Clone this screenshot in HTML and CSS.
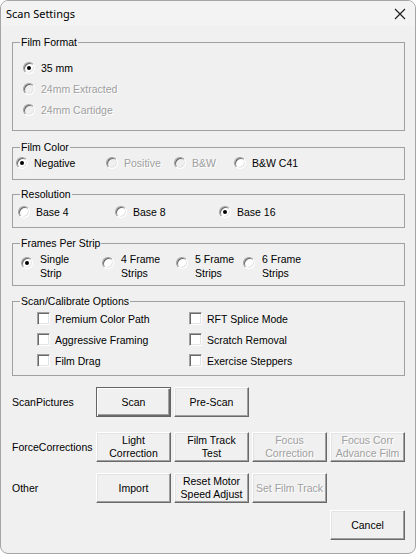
FILE: index.html
```html
<!DOCTYPE html>
<html lang="en">
<head>
    <meta charset="UTF-8">
    <title>Scan Settings</title>
    <link rel="stylesheet" href="styles.css">
</head>
<body>
    <div class="window">
        <div class="titlebar">
            <span class="title">Scan Settings</span>
            <svg class="close" width="12" height="12" viewBox="0 0 12 12">
                <path d="M1 1 L11 11 M11 1 L1 11" stroke="#1a1a1a" stroke-width="1.1" fill="none"/>
            </svg>
        </div>

        <div class="content">
            <!-- Film Format -->
            <fieldset class="group group-format">
                <legend>Film Format</legend>
                <div class="group-body">
                    <div class="opt"><span class="radio checked"></span>35 mm</div>
                    <div class="opt disabled"><span class="radio"></span>24mm Extracted</div>
                    <div class="opt disabled"><span class="radio"></span>24mm Cartidge</div>
                </div>
            </fieldset>

            <!-- Film Color -->
            <fieldset class="group group-color">
                <legend>Film Color</legend>
                <div class="group-body">
                    <div class="opt"><span class="radio checked"></span>Negative</div>
                    <div class="opt disabled"><span class="radio"></span>Positive</div>
                    <div class="opt disabled"><span class="radio"></span>B&amp;W</div>
                    <div class="opt"><span class="radio"></span>B&amp;W C41</div>
                </div>
            </fieldset>

            <!-- Resolution -->
            <fieldset class="group group-res">
                <legend>Resolution</legend>
                <div class="group-body">
                    <div class="opt"><span class="radio"></span>Base 4</div>
                    <div class="opt"><span class="radio"></span>Base 8</div>
                    <div class="opt"><span class="radio checked"></span>Base 16</div>
                </div>
            </fieldset>

            <!-- Frames Per Strip -->
            <fieldset class="group group-frames">
                <legend>Frames Per Strip</legend>
                <div class="group-body">
                    <div class="opt multi"><span class="radio checked"></span><span>Single<br>Strip</span></div>
                    <div class="opt multi"><span class="radio"></span><span>4 Frame<br>Strips</span></div>
                    <div class="opt multi"><span class="radio"></span><span>5 Frame<br>Strips</span></div>
                    <div class="opt multi"><span class="radio"></span><span>6 Frame<br>Strips</span></div>
                </div>
            </fieldset>

            <!-- Scan/Calibrate Options -->
            <fieldset class="group group-options">
                <legend>Scan/Calibrate Options</legend>
                <div class="group-body">
                    <div class="opt"><span class="check"></span>Premium Color Path</div>
                    <div class="opt"><span class="check"></span>RFT Splice Mode</div>
                    <div class="opt"><span class="check"></span>Aggressive Framing</div>
                    <div class="opt"><span class="check"></span>Scratch Removal</div>
                    <div class="opt"><span class="check"></span>Film Drag</div>
                    <div class="opt"><span class="check"></span>Exercise Steppers</div>
                </div>
            </fieldset>

            <!-- Botoes -->
            <div class="btn-row row-scan">
                <span class="row-label">ScanPictures</span>
                <button class="btn default">Scan</button>
                <button class="btn">Pre-Scan</button>
            </div>
            <div class="btn-row row-force">
                <span class="row-label">ForceCorrections</span>
                <button class="btn">Light<br>Correction</button>
                <button class="btn">Film Track<br>Test</button>
                <button class="btn" disabled>Focus<br>Correction</button>
                <button class="btn" disabled>Focus Corr<br>Advance Film</button>
            </div>
            <div class="btn-row row-other">
                <span class="row-label">Other</span>
                <button class="btn">Import</button>
                <button class="btn">Reset Motor<br>Speed Adjust</button>
                <button class="btn" disabled>Set Film Track</button>
            </div>
            <div class="btn-row row-cancel">
                <button class="btn">Cancel</button>
            </div>
        </div>
    </div>
</body>
</html>
```

FILE: styles.css
```css
* {
    box-sizing: border-box;
}

body {
    margin: 0;
    background-color: #ffffff;
    font-family: "Liberation Sans", Arial, sans-serif;
    font-size: 10.5px;
    color: #000000;
}

.window {
    width: 416px;
    height: 554px;
    background-color: #f0f0f0;
    border: 1px solid #a5a5a5;
    border-radius: 8px;
    overflow: hidden;
}

.titlebar {
    height: 25px;
    background-color: #f3f3f3;
    display: flex;
    align-items: center;
    justify-content: space-between;
    padding: 0 9px 1px 5px;
}

.title {
    font-family: "Noto Sans", sans-serif;
    font-size: 11px;
}

.close {
    display: block;
    margin-top: 1px;
}

.content {
    padding: 0 10px 0 11px;
}

/* Group boxes */
.group {
    margin: 0;
    padding: 0;
    min-width: 0;
    border: 1px solid #a0a0a0;
}

.group legend {
    margin-left: 7px;
    padding: 0 1px;
    line-height: 12px;
}

.group-format { margin-top: 10px; }
.group-color { margin-top: 10px; }
.group-res { margin-top: 8px; }
.group-frames { margin-top: 9px; }
.group-options { margin-top: 9px; }

.group-format .group-body {
    padding: 9px 0 10px 10px;
}

.group-format .opt {
    height: 21px;
}

.group-color .group-body {
    display: grid;
    grid-template-columns: 90px 68px 60px auto;
    padding: 2px 0 8px 3px;
}

.group-res .group-body {
    display: grid;
    grid-template-columns: 97px 104px auto;
    padding: 4px 0 7px 5px;
}

.group-frames .group-body {
    display: grid;
    grid-template-columns: 81px 74px 67px auto;
    padding: 3px 0 5px 8px;
}

.group-options .group-body {
    display: grid;
    grid-template-columns: 152px auto;
    grid-auto-rows: 21px;
    padding: 1px 0 4px 24px;
}

.opt {
    display: flex;
    align-items: center;
    height: 16px;
    white-space: nowrap;
}

.opt.multi {
    height: 28px;
    align-items: flex-start;
    line-height: 14px;
}

.opt.multi .radio {
    margin-top: 5px;
    margin-right: 7px;
}

.opt.disabled {
    color: #a0a0a0;
    text-shadow: 1px 1px #ffffff;
}

.group-options .opt {
    height: 21px;
}

/* Radio e checkbox no estilo classico */
.radio {
    position: relative;
    flex: none;
    width: 12px;
    height: 12px;
    margin-right: 6px;
    border-radius: 50%;
    border: 1px solid;
    border-color: #a0a0a0 #ffffff #ffffff #a0a0a0;
    box-shadow: inset 1px 1px #696969, inset -1px -1px #e3e3e3;
    background-color: #ffffff;
}

.disabled .radio {
    background-color: #f0f0f0;
}

.radio.checked::after {
    content: "";
    position: absolute;
    left: 3px;
    top: 3px;
    width: 4px;
    height: 4px;
    border-radius: 50%;
    background-color: #000000;
}

.check {
    flex: none;
    width: 13px;
    height: 13px;
    margin-right: 5px;
    border: 1px solid;
    border-color: #a0a0a0 #ffffff #ffffff #a0a0a0;
    box-shadow: inset 1px 1px #696969, inset -1px -1px #e3e3e3;
    background-color: #ffffff;
}

/* Linhas de botoes */
.btn-row {
    display: flex;
    align-items: center;
    gap: 3px;
}

.row-scan { margin-top: 11px; }
.row-force { margin-top: 15px; }
.row-other { margin-top: 11px; }
.row-cancel {
    margin-top: 7px;
    justify-content: flex-end;
}

.row-label {
    width: 81px;
    white-space: nowrap;
}

.btn {
    width: 75px;
    height: 30px;
    padding: 0;
    margin: 0;
    font-family: inherit;
    font-size: inherit;
    line-height: 13px;
    color: #000000;
    background-color: #f0f0f0;
    border: 1px solid;
    border-color: #ffffff #696969 #696969 #ffffff;
    box-shadow: inset -1px -1px #a0a0a0, inset 1px 1px #e3e3e3;
    border-radius: 0;
}

.btn.default {
    border-color: #646464;
    box-shadow: inset 1px 1px #ffffff, inset -1px -1px #696969, inset -2px -2px #a0a0a0;
}

.btn:disabled {
    color: #a0a0a0;
    text-shadow: 1px 1px #ffffff;
}
```
